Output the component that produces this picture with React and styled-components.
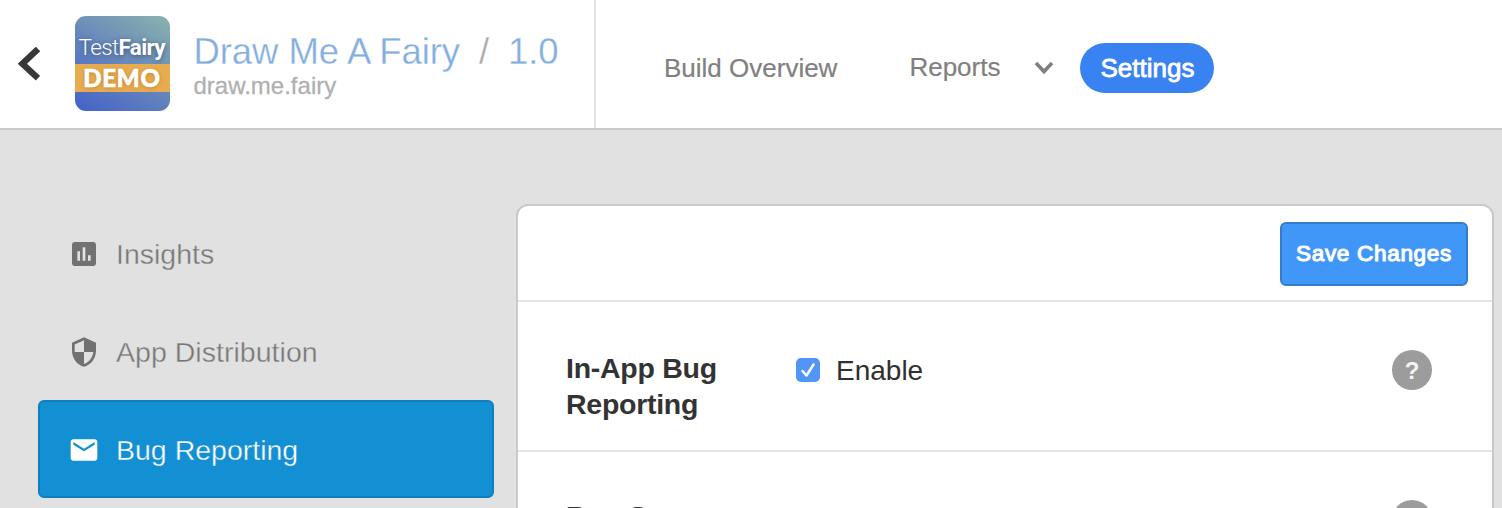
import React from "react";
import styled, { createGlobalStyle } from "styled-components";

const Global = createGlobalStyle`
  *, *::before, *::after { box-sizing: border-box; }
  html, body { margin: 0; height: 100%; overflow: hidden; background: #e1e1e1; }
  body { font-family: "Liberation Sans", Arial, Helvetica, sans-serif; }
  #root { height: 100%; }
`;

const Page = styled.div`
  display: flex;
  flex-direction: column;
  width: 1502px;
  height: 508px;
  overflow: hidden;
`;

const Header = styled.header`
  display: flex;
  flex: none;
  height: 130px;
  background: #fff;
  border-bottom: 2px solid #cacaca;
`;

const AppInfo = styled.div`
  display: flex;
  width: 596px;
  padding-left: 18px;
  border-right: 2px solid #e4e4e4;
`;

const BackIcon = styled.svg`
  flex: none;
  width: 22px;
  height: 34px;
  margin-top: 47px;
`;

const Logo = styled.div`
  display: flex;
  flex-direction: column;
  flex: none;
  width: 95px;
  height: 95px;
  margin: 16px 24px 0 34.5px;
  border-radius: 11px;
  overflow: hidden;
  background: linear-gradient(33deg, #4361c8 0%, #6585bd 48%, #8ab3ad 100%);
  color: #fff;
`;

const LogoName = styled.div`
  height: 48px;
  padding: 17px 0 0 4px;
  font: 300 22.5px/29px Roboto, sans-serif;
  letter-spacing: -0.65px;
  white-space: nowrap;
  text-shadow: 0 1px 5px rgba(20, 40, 70, 0.6);
  b { font-weight: 700; }
`;

const LogoBand = styled.div`
  height: 28px;
  background: #e8ac50;
  text-align: center;
  font: 900 24px/27px Lato, sans-serif;
  letter-spacing: 0.8px;
  text-shadow: 0 1px 4px rgba(130, 75, 0, 0.4);
  -webkit-text-stroke: 0.6px #fff;
`;

const Titles = styled.div`
  display: flex;
  flex-direction: column;
  padding-top: 31px;
  white-space: nowrap;
`;

const Title = styled.div`
  display: flex;
  gap: 19px;
  font-size: 36.5px;
  line-height: 42px;
  letter-spacing: -0.08px;
  color: #85aedf;
  -webkit-text-stroke: 0.3px #fff;
`;

const Slash = styled.span`
  color: #aaa;
`;

const Subtitle = styled.div`
  font-size: 24px;
  line-height: 26px;
  color: #b0b0b0;
  -webkit-text-stroke: 0.3px #b0b0b0;
`;

const Nav = styled.nav`
  display: flex;
  align-items: center;
  height: 50px;
  margin: 43px 0 0 68px;
  font-size: 26px;
  color: #808080;
`;

const NavItem = styled.span`
  margin-right: ${(p) => p.$gap}px;
  padding-bottom: ${(p) => (p.$raised ? 2 : 0)}px;
  white-space: nowrap;
  -webkit-text-stroke: 0.2px #808080;
`;

const Chevron = styled.svg`
  width: 20px;
  height: 14px;
  margin-right: 26px;
`;

const Pill = styled.span`
  width: 134px;
  height: 50px;
  border-radius: 25px;
  background: #3882f2;
  color: #fff;
  line-height: 50px;
  text-align: center;
  -webkit-text-stroke: 0.8px #fff;
`;

const Body = styled.main`
  display: flex;
  flex: 1;
  min-height: 0;
`;

const Sidebar = styled.aside`
  width: 456px;
  margin: 74px 22px 0 38px;
`;

const SideItem = styled.div`
  display: flex;
  align-items: center;
  height: 98px;
  padding: 2px 0 0 28px;
  border: 2px solid ${(p) => (p.$active ? "#0f7fc0" : "transparent")};
  border-radius: 6px;
  background: ${(p) => (p.$active ? "#138fd3" : "transparent")};
  color: ${(p) => (p.$active ? "#fff" : "#777")};
  font-size: 28.5px;
  letter-spacing: ${(p) => p.$spacing || 0}px;
  -webkit-text-stroke: 0.35px ${(p) => (p.$active ? "#138fd3" : "#e1e1e1")};
  svg {
    flex: none;
    width: 32px;
    height: 32px;
    margin: 0 16px 0 0;
    fill: ${(p) => (p.$active ? "#fff" : "#717171")};
    stroke: none;
  }
`;

const SideLabel = styled.span`
  padding-top: 1px;
`;

const Panel = styled.section`
  width: 978px;
  height: 420px;
  margin-top: 74px;
  border: 2px solid #c9c9c9;
  border-radius: 12px;
  background: #fff;
  color: #333;
  font-size: 28px;
`;

const Toolbar = styled.div`
  display: flex;
  justify-content: flex-end;
  height: 96px;
  padding: 16px 24px 0 0;
  border-bottom: 2px solid #e4e4e4;
`;

const SaveButton = styled.button`
  width: 188px;
  height: 64px;
  padding: 0;
  border: 2px solid #347bcb;
  border-radius: 6px;
  background: #4197f7;
  color: #fff;
  font: 400 22.5px/60px "Liberation Sans", Arial, sans-serif;
  letter-spacing: 0.7px;
  -webkit-text-stroke: 1.1px #fff;
  white-space: nowrap;
`;

const Setting = styled.div`
  display: flex;
  align-items: flex-start;
  height: 150px;
  padding: 48px 60px 0 48px;
  border-bottom: 2px solid #e4e4e4;
`;

const SettingName = styled.div`
  width: 230px;
  padding-right: 60px;
  font-size: 28.5px;
  font-weight: 700;
  letter-spacing: -0.27px;
  line-height: ${(p) => (p.$single ? 33 : 36)}px;
`;

const Option = styled.label`
  display: flex;
  align-items: center;
  flex: 1;
  gap: 16px;
  height: 40px;
  color: #2f2f2f;
`;

const OptionText = styled.span`
  padding-top: 1px;
`;

const Check = styled.svg`
  width: 24px;
  height: 24px;
`;

const Help = styled.span`
  width: 40px;
  height: 40px;
  border-radius: 50%;
  background: #9c9c9c;
  color: #f4f4f4;
  font: 700 24px/41px "Liberation Sans", Arial, sans-serif;
  text-align: center;
`;

export default function App() {
  return (
    <>
      <Global />
      <Page>
        <Header>
          <AppInfo>
            <BackIcon viewBox="0 0 22 34">
              <path d="M20 2 L4.4 16.7 L20 31.2" fill="none" stroke="#383838" strokeWidth="6.3" />
            </BackIcon>
            <Logo>
              <LogoName>Test<b>Fairy</b></LogoName>
              <LogoBand>DEMO</LogoBand>
            </Logo>
            <Titles>
              <Title>
                <span>Draw Me A Fairy</span>
                <Slash>/</Slash>
                <span>1.0</span>
              </Title>
              <Subtitle>draw.me.fairy</Subtitle>
            </Titles>
          </AppInfo>
          <Nav>
            <NavItem $gap={72}>Build Overview</NavItem>
            <NavItem $gap={34} $raised>Reports</NavItem>
            <Chevron viewBox="0 0 20 14">
              <path d="M2 2 L10 10.5 L18 2" fill="none" stroke="#808080" strokeWidth="3.6" />
            </Chevron>
            <Pill>Settings</Pill>
          </Nav>
        </Header>
        <Body>
          <Sidebar>
            <SideItem>
              <svg viewBox="0 0 24 24">
                <path d="M19 3H5c-1.1 0-2 .9-2 2v14c0 1.1.9 2 2 2h14c1.1 0 2-.9 2-2V5c0-1.1-.9-2-2-2zM9 17H7v-7h2v7zm4 0h-2V7h2v10zm4 0h-2v-4h2v4z" />
              </svg>
              <SideLabel>Insights</SideLabel>
            </SideItem>
            <SideItem $spacing={0.03}>
              <svg viewBox="0 0 24 24">
                <path d="M12 1L3 5v6c0 5.55 3.84 10.74 9 12 5.16-1.26 9-6.45 9-12V5l-9-4zm0 10.99h7c-.53 4.12-3.28 7.79-7 8.94V12H5V6.3l7-3.11v8.8z" />
              </svg>
              <SideLabel>App Distribution</SideLabel>
            </SideItem>
            <SideItem $active>
              <svg viewBox="0 0 24 24">
                <path d="M20 4H4c-1.1 0-1.99.9-1.99 2L2 18c0 1.1.9 2 2 2h16c1.1 0 2-.9 2-2V6c0-1.1-.9-2-2-2zm0 4l-8 5-8-5V6l8 5 8-5v2z" />
              </svg>
              <SideLabel>Bug Reporting</SideLabel>
            </SideItem>
          </Sidebar>
          <Panel>
            <Toolbar>
              <SaveButton>Save Changes</SaveButton>
            </Toolbar>
            <Setting>
              <SettingName>In-App Bug Reporting</SettingName>
              <Option>
                <Check viewBox="0 0 24 24">
                  <rect width="24" height="24" rx="5" fill="#5196f6" />
                  <path d="M6.5 13 L10.5 17.5 L17.5 6.5" fill="none" stroke="#fff" strokeWidth="2.5" strokeLinecap="round" strokeLinejoin="round" />
                </Check>
                <OptionText>Enable</OptionText>
              </Option>
              <Help>?</Help>
            </Setting>
            <Setting>
              <SettingName $single>Bug Source</SettingName>
              <Option />
              <Help>?</Help>
            </Setting>
          </Panel>
        </Body>
      </Page>
    </>
  );
}
